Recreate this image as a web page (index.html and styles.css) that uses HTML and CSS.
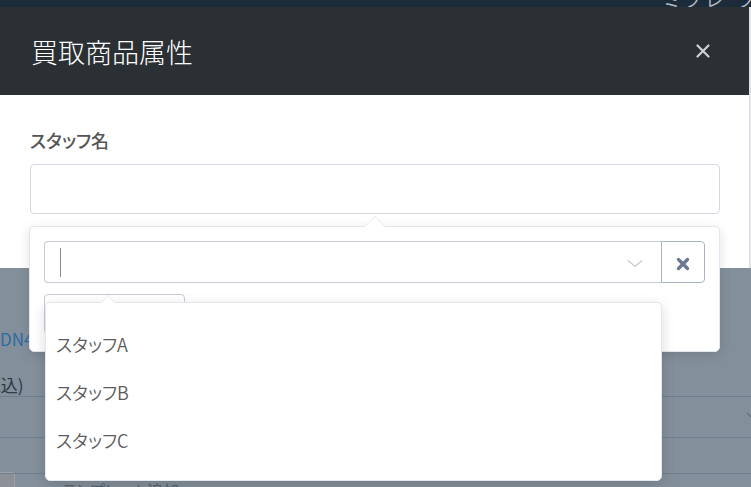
FILE: index.html
```html
<!DOCTYPE html>
<html lang="ja">
<head>
  <meta charset="UTF-8" />
  <meta name="viewport" content="width=device-width, initial-scale=1.0"/>
  <title>買取商品属性</title>
  <link rel="stylesheet" href="styles.css">
</head>
<body>

  <!-- Page behind the dialog -->
  <nav class="topbar">
    <span class="topbar-menu">ミフレ フ</span>
  </nav>
  <main class="bg-page">
    <div class="bg-spacer"></div>
    <div class="bg-link">DN4-0012</div>
    <div class="bg-total"><span>(税込)</span></div>
    <div class="bg-row">
      <svg class="bg-chevron" width="10" height="6" viewBox="0 0 10 6"><path d="M1 1l4 4 4-4" fill="none" stroke="#5f6e7c" stroke-width="1.2"/></svg>
    </div>
    <div class="bg-row bg-row-short"></div>
    <div class="bg-last">
      <span class="bg-box"></span>
      <span class="bg-text">テンプレート追加</span>
    </div>
  </main>

  <!-- Dialog -->
  <div class="modal">
    <div class="modal-header">
      <h4 class="modal-title">買取商品属性</h4>
      <button class="modal-close" aria-label="閉じる">
        <svg width="14" height="14" viewBox="0 0 14 14"><path d="M1.5 1.5l11 11M12.5 1.5l-11 11" stroke="#cfd1d3" stroke-width="2.2" stroke-linecap="round"/></svg>
      </button>
    </div>
    <div class="modal-body">
      <label class="field-label">スタッフ名</label>
      <div class="field">
        <div class="field-input"></div>

        <!-- Picker popover -->
        <div class="popover">
          <div class="select-group">
            <div class="select-box">
              <span class="caret"></span>
              <svg class="select-chevron" width="16" height="9" viewBox="0 0 16 9"><path d="M1 1.5l7 6 7-6" fill="none" stroke="#c3c8d1" stroke-width="1.3"/></svg>
            </div>
            <button class="select-clear" aria-label="クリア">
              <svg width="14" height="14" viewBox="0 0 14 14"><path d="M2.5 2.5l9 9M11.5 2.5l-9 9" stroke="#6b7995" stroke-width="3.4" stroke-linecap="round"/></svg>
            </button>
          </div>
          <div class="popover-actions">
            <button class="btn-outline">決定</button>
            <ul class="dropdown">
              <li>スタッフA</li>
              <li>スタッフB</li>
              <li>スタッフC</li>
            </ul>
          </div>
        </div>
      </div>
    </div>
  </div>

</body>
</html>
```

FILE: styles.css
```css
body {
  margin: 0;
  height: 487px;
  overflow: hidden;
  position: relative;
  font-family: "Noto Sans CJK JP", "Noto Sans", sans-serif;
  font-feature-settings: "palt";
  background-color: #838f9b;
}

/* page behind the dialog */

.topbar {
  height: 7px;
  background-color: #1b2b39;
  overflow: hidden;
  display: flex;
  justify-content: flex-end;
}

.topbar-menu {
  font-size: 18px;
  line-height: 18px;
  margin-top: -10px;
  margin-right: -8px;
  letter-spacing: 6px;
  color: #aeb8c2;
  white-space: nowrap;
}

.bg-page {
  font-size: 17px;
  color: #2d3944;
}

.bg-spacer {
  height: 321px;
}

.bg-link {
  line-height: 22px;
  color: #2b6ca3;
  white-space: nowrap;
}

.bg-total {
  margin-top: 24px;
  line-height: 22px;
  border-bottom: 1px solid #6f7f8e;
  white-space: nowrap;
}

.bg-total span {
  display: inline-block;
  margin-left: -22px;
}

.bg-row {
  height: 40px;
  border-bottom: 1px solid #6f7f8e;
  position: relative;
}

.bg-row-short {
  height: 35px;
}

.bg-chevron {
  position: absolute;
  right: -5px;
  top: 15px;
}

.bg-last {
  display: flex;
  align-items: flex-start;
}

.bg-box {
  width: 14px;
  height: 16px;
  margin-top: -2px;
  background-color: #8d9096;
  border: 1px solid #9ba1a8;
  border-left: none;
  border-radius: 0 3px 0 0;
}

.bg-text {
  margin-left: 47px;
  padding-top: 5px;
  font-size: 16px;
  line-height: 22px;
  color: #56626e;
}

/* dialog */

.modal {
  position: absolute;
  top: 7px;
  left: 0;
  width: 749px;
  border-right: 2px solid #dfe3e7;
}

.modal-header {
  height: 88px;
  background-color: #2b3035;
  display: flex;
  align-items: center;
  justify-content: space-between;
  padding: 0 39px 0 31px;
}

.modal-title {
  margin: 0;
  font-size: 27px;
  font-weight: 300;
  line-height: 1;
  color: #fff;
}

.modal-close {
  padding: 0;
  border: none;
  background: none;
  width: 14px;
  height: 14px;
  display: flex;
  cursor: pointer;
}

.modal-body {
  height: 173px;
  box-sizing: border-box;
  padding: 33px 29px 0 30px;
  background-color: #fff;
}

.field-label {
  display: block;
  font-size: 18px;
  font-weight: 500;
  line-height: 24px;
  margin-bottom: 12px;
  color: #555;
}

.field {
  position: relative;
}

.field-input {
  height: 50px;
  box-sizing: border-box;
  border: 1px solid #d3d9e2;
  border-radius: 4px;
}

/* popover under the input */

.popover {
  position: absolute;
  top: 62px;
  left: -1px;
  right: 0;
  z-index: 2;
  box-sizing: border-box;
  padding: 14px 14px 17px;
  background-color: #fff;
  border: 1px solid #e3e6ed;
  border-radius: 5px;
  box-shadow: 0 3px 12px rgba(0, 0, 0, 0.12);
}

.popover::before,
.popover::after {
  content: "";
  position: absolute;
  left: 50%;
  margin-left: -11px;
  border: 11px solid transparent;
  border-top: none;
}

.popover::before {
  top: -11px;
  border-bottom-color: #e3e6ed;
}

.popover::after {
  top: -10px;
  border-bottom-color: #fff;
}

.select-group {
  display: flex;
  height: 42px;
}

.select-box {
  flex: 1;
  display: flex;
  align-items: center;
  padding: 0 18px 0 15px;
  border: 1px solid #c5ccd8;
  border-right: none;
  border-radius: 4px 0 0 4px;
}

.caret {
  width: 1px;
  height: 29px;
  background-color: #8a8a8a;
}

.select-chevron {
  margin-left: auto;
  margin-top: 2px;
}

.select-clear {
  width: 44px;
  padding: 3px 0 0;
  display: flex;
  align-items: center;
  justify-content: center;
  background-color: #fff;
  border: 1px solid #a9b3c4;
  border-radius: 0 4px 4px 0;
  cursor: pointer;
}

.popover-actions {
  position: relative;
  margin-top: 11px;
}

.btn-outline {
  display: block;
  width: 141px;
  height: 40px;
  background-color: #fff;
  border: 1px solid #c5ccd8;
  border-radius: 4px;
  font: inherit;
  font-size: 15px;
  color: #555;
}

/* staff list */

.dropdown {
  position: absolute;
  top: 8px;
  left: 1px;
  width: 617px;
  height: 179px;
  box-sizing: border-box;
  margin: 0;
  padding: 17px 0 0;
  list-style: none;
  background-color: #fff;
  border: 1px solid #e4e7ed;
  border-radius: 5px;
  box-shadow: 0 4px 14px rgba(0, 0, 0, 0.14);
}

.dropdown::before,
.dropdown::after {
  content: "";
  position: absolute;
  left: 55px;
  border: 7px solid transparent;
  border-top: none;
}

.dropdown::before {
  top: -8px;
  border-bottom: 8px solid #e4e7ed;
}

.dropdown::after {
  top: -7px;
  border-bottom: 8px solid #fff;
}

.dropdown li {
  height: 48px;
  line-height: 48px;
  padding-left: 10px;
  font-size: 18px;
  font-weight: 350;
  color: #5b5b5b;
}
```
